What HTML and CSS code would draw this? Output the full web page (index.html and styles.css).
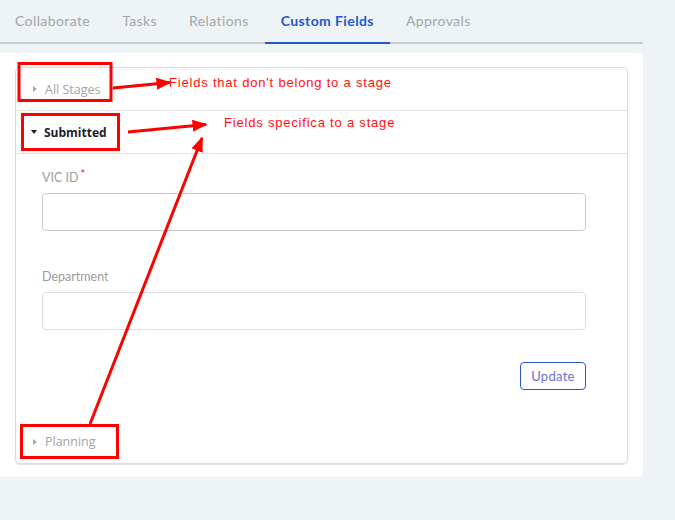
FILE: index.html
```html
<!DOCTYPE html>
<html lang="en">
<head>
    <meta charset="UTF-8">
    <title>Custom Fields</title>
    <link rel="stylesheet" href="styles.css">
</head>
<body>
    <div class="page">
        <nav class="tabs">
            <a href="#" class="tab">Collaborate</a>
            <a href="#" class="tab">Tasks</a>
            <a href="#" class="tab">Relations</a>
            <a href="#" class="tab active">Custom Fields</a>
            <a href="#" class="tab">Approvals</a>
        </nav>

        <div class="panel">
            <div class="stages">
                <div class="stage-header">
                    <span class="caret caret-right"></span>
                    <span class="stage-name">All Stages</span>
                </div>
                <div class="stage-header open">
                    <span class="caret caret-down"></span>
                    <span class="stage-name">Submitted</span>
                </div>
                <div class="stage-body">
                    <div class="field">
                        <label for="vicId">VIC ID<span class="required">*</span></label>
                        <input type="text" id="vicId" class="strong">
                    </div>
                    <div class="field">
                        <label for="department">Department</label>
                        <input type="text" id="department">
                    </div>
                    <div class="actions">
                        <button type="button" class="btn-outline">Update</button>
                    </div>
                </div>
                <div class="stage-header last">
                    <span class="caret caret-right"></span>
                    <span class="stage-name">Planning</span>
                </div>
            </div>
        </div>

        <!-- annotations drawn on top of the screenshot -->
        <svg class="notes" width="675" height="520" viewBox="0 0 675 520">
            <defs>
                <marker id="head" markerWidth="5" markerHeight="4" refX="4.5" refY="2" orient="auto" markerUnits="strokeWidth">
                    <path d="M0,0 L5,2 L0,4 Z" fill="#ff0000"/>
                </marker>
            </defs>
            <g fill="none" stroke="#ff0000" stroke-width="3">
                <rect x="19" y="63.5" width="92" height="37"/>
                <rect x="22.5" y="114.5" width="96" height="35"/>
                <rect x="21.5" y="425.5" width="96" height="32"/>
                <line x1="113" y1="88" x2="170" y2="82.5" marker-end="url(#head)"/>
                <line x1="128" y1="132" x2="206" y2="124.5" marker-end="url(#head)"/>
                <line x1="90" y1="424" x2="202" y2="138" marker-end="url(#head)"/>
            </g>
        </svg>
        <div class="note note-1">Fields that don't belong to a stage</div>
        <div class="note note-2">Fields specifica to a stage</div>
    </div>
</body>
</html>
```

FILE: styles.css
```css
body {
    margin: 0;
    background: #eef3f6;
    font-family: 'Lato', 'Open Sans', sans-serif;
}
.page {
    position: relative;
    width: 675px;
    height: 520px;
}
.tabs {
    display: flex;
    width: 643px;
    height: 42px;
    border-bottom: 2px solid #c7ccd0;
}
.tab {
    display: flex;
    align-items: center;
    padding: 0 16px 2px;
    margin-bottom: -2px;
    border-bottom: 2px solid transparent;
    color: #a4a7aa;
    font-size: 14px;
    letter-spacing: 0.4px;
    text-decoration: none;
}
.tab:first-child {
    padding-left: 15px;
}
.tab.active {
    color: #2458cf;
    font-weight: bold;
    border-bottom-color: #2458cf;
}
.panel {
    margin-top: 9px;
    width: 643px;
    box-sizing: border-box;
    padding: 14px 15px 13px;
    background: #fff;
    border-radius: 0 6px 6px 0;
}
.stages {
    border: 1px solid #dcdcdc;
    border-radius: 5px;
    box-shadow: 0 1px 1px rgba(0, 0, 0, 0.12);
}
.stage-header {
    display: flex;
    align-items: center;
    height: 42px;
    padding-left: 16px;
    border-bottom: 1px solid #e2e2e2;
    font-family: 'Open Sans', sans-serif;
    font-size: 12.5px;
    color: #a3a3a3;
}
.stage-header.open {
    color: #1b1c2a;
    font-weight: bold;
    font-size: 12px;
}
.stage-header.last {
    border-bottom: none;
    height: 43px;
}
.caret {
    width: 0;
    height: 0;
}
.caret-right {
    border-top: 3.5px solid transparent;
    border-bottom: 3.5px solid transparent;
    border-left: 4px solid #a8a8a8;
    margin-left: 1px;
    margin-right: 8px;
}
.caret-down {
    border-left: 3.5px solid transparent;
    border-right: 3.5px solid transparent;
    border-top: 4px solid #222;
    margin-left: -1px;
    margin-right: 7px;
}
.stage-body {
    padding: 16px 41px 30px 26px;
}
.field {
    margin-bottom: 38px;
}
.field label {
    display: block;
    height: 16px;
    line-height: 16px;
    margin-bottom: 7px;
    font-size: 12.5px;
    color: #9c9c9c;
}
.required {
    position: relative;
    top: -4px;
    margin-left: 2px;
    color: #d22;
    font-size: 11px;
}
.field input {
    display: block;
    width: 100%;
    height: 38px;
    box-sizing: border-box;
    border: 1px solid #dedede;
    border-radius: 4px;
    outline: none;
}
.field input.strong {
    border-color: #cacaca;
}
.actions {
    display: flex;
    justify-content: flex-end;
    margin-top: -6px;
}
.btn-outline {
    width: 66px;
    height: 28px;
    border: 1px solid #2458cf;
    border-radius: 4px;
    background: #fff;
    color: #6b6fd6;
    font-family: 'Lato', sans-serif;
    font-size: 13px;
    letter-spacing: 0.3px;
    cursor: pointer;
}
.notes {
    position: absolute;
    top: 0;
    left: 0;
}
.note {
    position: absolute;
    color: #ff1010;
    font-family: 'Liberation Sans', sans-serif;
    font-size: 13px;
    letter-spacing: 0.8px;
    white-space: nowrap;
}
.note-1 {
    left: 169px;
    top: 75px;
}
.note-2 {
    left: 224px;
    top: 115px;
}
```
